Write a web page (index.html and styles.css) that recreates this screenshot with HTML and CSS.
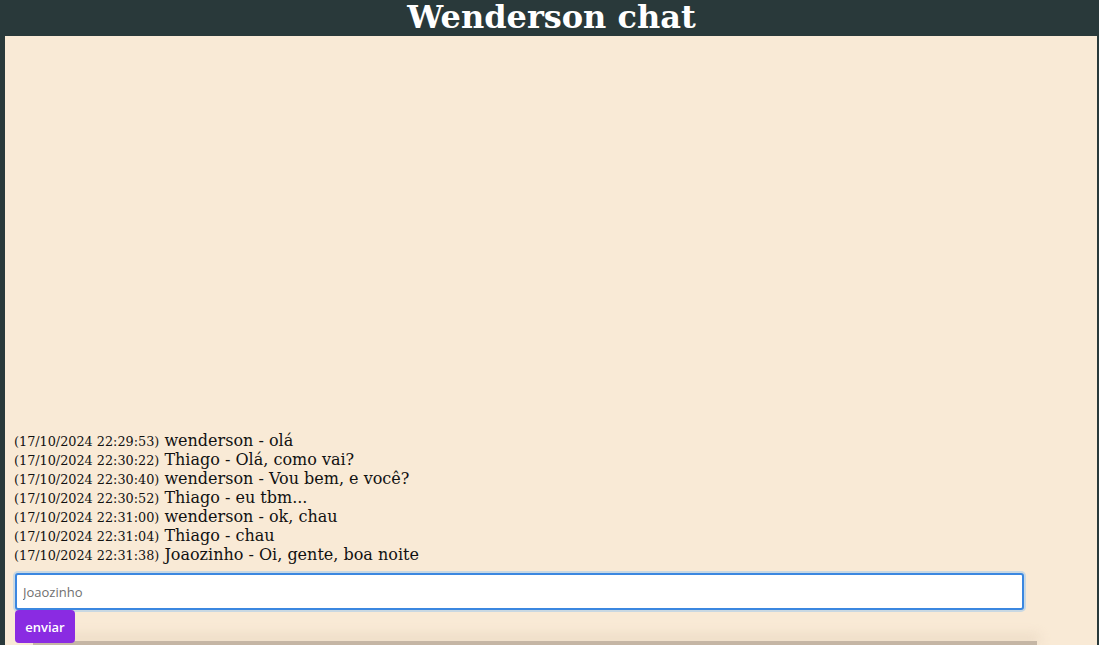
FILE: index.html
```html
<!DOCTYPE html>
<html lang="pt">
<head>
<meta charset="utf-8">
<title>Wenderson chat</title>
<link rel="stylesheet" href="styles.css">
</head>
<body>
<header class="topbar"><h1 class="title">Wenderson chat</h1></header>
<main class="chat">
  <div class="messages">
    <div class="msg"><span class="time">(17/10/2024 22:29:53)</span> wenderson - olá</div>
    <div class="msg"><span class="time">(17/10/2024 22:30:22)</span> Thiago - Olá, como vai?</div>
    <div class="msg"><span class="time">(17/10/2024 22:30:40)</span> wenderson - Vou bem, e você?</div>
    <div class="msg"><span class="time">(17/10/2024 22:30:52)</span> Thiago - eu tbm...</div>
    <div class="msg"><span class="time">(17/10/2024 22:31:00)</span> wenderson - ok, chau</div>
    <div class="msg"><span class="time">(17/10/2024 22:31:04)</span> Thiago - chau</div>
    <div class="msg"><span class="time">(17/10/2024 22:31:38)</span> Joaozinho - Oi, gente, boa noite</div>
  </div>
  <form class="composer">
    <input class="field" type="text" placeholder="Joaozinho" autofocus>
    <button class="send" type="button">enviar</button>
    <div class="bar"></div>
  </form>
</main>
</body>
</html>
```
FILE: styles.css
```css
html, body {
  margin: 0;
  padding: 0;
  height: 100%;
  overflow: hidden;
}
body {
  background: #29393a;
  font-family: "DejaVu Serif", serif;
  display: flex;
  flex-direction: column;
}
.topbar {
  height: 36px;
  flex: none;
}
.title {
  margin: 0;
  padding-left: 4px;
  text-align: center;
  color: #ffffff;
  font-family: "DejaVu Serif", serif;
  font-weight: bold;
  font-size: 32px;
  line-height: 34px;
}
.chat {
  flex: 1;
  margin: 0 2px 0 5px;
  background: #f9ead6;
  display: flex;
  flex-direction: column;
  overflow: hidden;
  padding-left: 9px;
}
.messages {
  flex: 1;
  display: flex;
  flex-direction: column;
  justify-content: flex-end;
  padding-bottom: 9px;
}
.msg {
  font-size: 16px;
  line-height: 19px;
  height: 19px;
  color: #111;
  white-space: nowrap;
}
.time {
  font-size: 12.8px;
  line-height: 1;
}
.composer {
  display: flex;
  flex-direction: column;
  align-items: flex-start;
  margin: 0;
}
.field {
  box-sizing: border-box;
  margin: 0 0 0 1px;
  width: 1009px;
  height: 37px;
  border: 2px solid #3b87e0;
  border-radius: 3px;
  box-shadow: 0 0 0 2px #c9d8e2;
  outline: none;
  background: #fff;
  padding: 0 6px;
  font-family: "Open Sans", "Noto Sans", sans-serif;
  font-size: 13px;
  color: #333;
}
.field::placeholder {
  color: #6f6f6f;
}
.send {
  position: relative;
  z-index: 1;
  margin: 0 0 0 1px;
  width: 60px;
  height: 33px;
  border: none;
  border-radius: 4px;
  background: #8a2be2;
  color: #fff;
  font-family: "Open Sans", "Noto Sans", sans-serif;
  font-size: 13px;
  font-weight: 600;
  padding: 0;
}
.bar {
  margin: -2px 0 0 19px;
  width: 1004px;
  height: 4px;
  background: #c5b6a5;
  box-shadow: 0 -4px 12px 2px rgba(214, 196, 170, 0.45);
}
```
